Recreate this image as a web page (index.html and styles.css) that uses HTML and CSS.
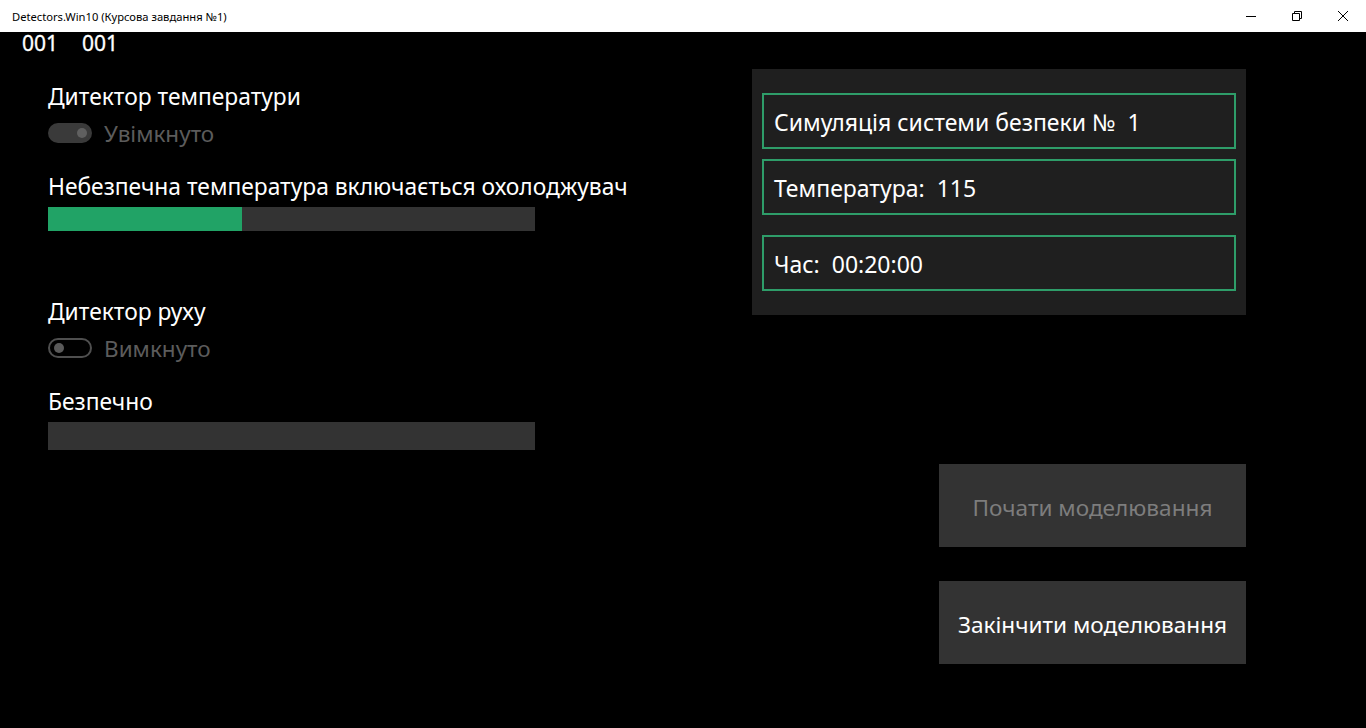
FILE: index.html
```html
<!DOCTYPE html>
<html lang="uk">
<head>
<meta charset="utf-8">
<title>Detectors.Win10</title>
<link rel="stylesheet" href="styles.css">
</head>
<body>
<div class="window">
  <header class="titlebar">
    <span class="title">Detectors.Win10 (Курсова завдання №1)</span>
    <div class="controls">
      <span class="ctl"><svg width="12" height="12" viewBox="0 0 12 12"><path d="M1 6.5h10" stroke="#000" stroke-width="1" fill="none"/></svg></span>
      <span class="ctl"><svg width="12" height="12" viewBox="0 0 12 12"><path d="M1.5 3.5h7v7h-7z M3.5 3.5V1.5h7v7h-2" stroke="#000" stroke-width="1" fill="none"/></svg></span>
      <span class="ctl"><svg width="12" height="12" viewBox="0 0 12 12"><path d="M1 1l10 10M11 1L1 11" stroke="#000" stroke-width="1" fill="none"/></svg></span>
    </div>
  </header>
  <main class="app">
    <div class="counters"><span>001</span><span>001</span></div>
    <div class="content">
      <section class="left">
        <h2 class="label">Дитектор температури</h2>
        <div class="toggle-row">
          <span class="toggle on"><span class="knob"></span></span>
          <span class="toggle-text">Увімкнуто</span>
        </div>
        <div class="label status">Небезпечна температура включається охолоджувач</div>
        <div class="bar bar-temp"><div class="fill" style="width:194px"></div></div>

        <h2 class="label motion">Дитектор руху</h2>
        <div class="toggle-row">
          <span class="toggle off"><span class="knob"></span></span>
          <span class="toggle-text">Вимкнуто</span>
        </div>
        <div class="label status">Безпечно</div>
        <div class="bar bar-motion"></div>
      </section>
      <section class="right">
        <div class="panel">
          <div class="field">Симуляція системи безпеки №&nbsp; 1</div>
          <div class="field">Температура:&nbsp; 115</div>
          <div class="field field-time">Час:&nbsp; 00:20:00</div>
        </div>
        <div class="buttons">
          <button class="btn disabled">Почати моделювання</button>
          <button class="btn">Закінчити моделювання</button>
        </div>
      </section>
    </div>
  </main>
</div>
</body>
</html>
```
FILE: styles.css
```css
* { box-sizing: border-box; }
html, body { margin: 0; padding: 0; }
body {
  width: 1366px;
  height: 728px;
  overflow: hidden;
  background: #000;
  font-family: "Noto Sans", "Open Sans", sans-serif;
}
.window { width: 1366px; height: 728px; display: flex; flex-direction: column; }
.titlebar {
  height: 32px;
  background: #fff;
  display: flex;
  align-items: center;
  justify-content: space-between;
  padding-left: 12px;
  flex-shrink: 0;
}
.title { font-size: 11.2px; color: #000; }
.controls { display: flex; height: 32px; }
.ctl {
  width: 46px;
  height: 32px;
  display: flex;
  align-items: center;
  justify-content: center;
}
.app { flex: 1; background: #000; color: #fff; }
.counters {
  height: 22px;
  line-height: 22px;
  padding-left: 22px;
  display: flex;
  gap: 24px;
  font-size: 21px;
  color: #fff;
  -webkit-text-stroke: 0.3px #fff;
}
.content { display: flex; }
.left { padding-left: 48px; padding-top: 29px; width: 600px; }
.label {
  margin: 0;
  font-weight: normal;
  font-size: 22.8px;
  line-height: 28px;
  padding-bottom: 2px;
  color: #fff;
  white-space: nowrap;
}
.motion { margin-top: 67px; }
.status { margin-top: 20px; }
.toggle-row { height: 40px; display: flex; align-items: center; gap: 12px; }
.toggle {
  width: 44px;
  height: 20px;
  border-radius: 10px;
  position: relative;
  display: inline-block;
}
.toggle.on { background: #3a3a3a; }
.toggle.off { border: 2px solid #4f4f4f; }
.knob {
  position: absolute;
  width: 10px;
  height: 10px;
  border-radius: 50%;
  background: #5a5a5a;
  top: 5px;
}
.toggle.on .knob { right: 5px; background: #606060; }
.toggle.off .knob { left: 4px; top: 3px; background: #5a5a5a; }
.toggle-text { font-size: 22.5px; color: #5c5c5c; }
.bar { width: 487px; background: #333; margin-top: 4px; }
.bar-temp { height: 24px; }
.bar-motion { height: 28px; }
.fill { height: 100%; background: #21a366; }
.right { margin-left: 152px; padding-top: 15px; width: 494px; }
.panel {
  background: #1f1f1f;
  padding: 24px 10px;
  display: flex;
  flex-direction: column;
  gap: 10px;
}
.field {
  height: 56px;
  border: 2px solid #2e9d69;
  padding-left: 10px;
  padding-top: 2px;
  display: flex;
  align-items: center;
  font-size: 23px;
  color: #fff;
}
.field-time { margin-top: 10px; }
.buttons {
  margin-top: 149px;
  display: flex;
  flex-direction: column;
  align-items: flex-end;
  gap: 34px;
}
.btn {
  width: 307px;
  height: 83px;
  background: #333;
  border: none;
  color: #fff;
  font-family: "Noto Sans", "Open Sans", sans-serif;
  font-size: 22.6px;
  padding: 3px 0 0;
}
.btn.disabled { color: #7d7d7d; }
```
